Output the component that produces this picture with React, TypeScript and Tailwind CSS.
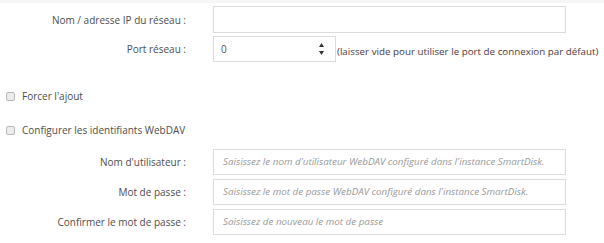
import React from "react";

const font = { fontFamily: '"Open Sans", "Liberation Sans", sans-serif' };

function Row({ label, children, className = "" }: { label: string; children: React.ReactNode; className?: string }) {
  return (
    <div className={"flex items-center " + className}>
      <div className="w-[186px] shrink-0 text-right text-[10px] text-[#4d4d4d] leading-none whitespace-nowrap">{label}</div>
      <div className="ml-[27px] flex items-center">{children}</div>
    </div>
  );
}

function Checkbox({ label, className = "" }: { label: string; className?: string }) {
  return (
    <div className={"flex items-center pl-[6px] " + className}>
      <span className="block w-[9px] h-[9px] rounded-[2px] border border-[#b9b9b9] bg-[#ececec]" />
      <span className="ml-[7px] text-[10px] text-[#4d4d4d] leading-none">{label}</span>
    </div>
  );
}

export default function App() {
  return (
    <div className="w-[604px] h-[243px] bg-white overflow-hidden" style={font}>
      <div className="h-[3px] bg-[#f6f6f6]" />
      <Row label="Nom / adresse IP du réseau :" className="mt-[3px]">
        <div className="w-[353px] h-[27px] border border-[#dcdcdc] bg-white" />
      </Row>
      <Row label="Port réseau :" className="mt-[3px]">
        <div className="w-[123px] h-[26px] border border-[#dcdcdc] bg-white flex items-center pl-[7px] pr-[11px]">
          <span className="text-[10px] text-[#555] leading-none flex-1">0</span>
          <div className="flex flex-col items-center gap-[4px]">
            <svg width="5" height="4" viewBox="0 0 5 4"><path d="M2.5 0L5 4H0z" fill="#333" /></svg>
            <svg width="5" height="4" viewBox="0 0 5 4"><path d="M0 0H5L2.5 4z" fill="#333" /></svg>
          </div>
        </div>
        <span className="ml-[1px] text-[9.8px] text-[#4a3a3e] leading-none mt-[5px] whitespace-nowrap">
          (laisser vide pour utiliser le port de connexion par défaut)
        </span>
      </Row>
      <Checkbox label="Forcer l'ajout" className="mt-[29px]" />
      <Checkbox label="Configurer les identifiants WebDAV" className="mt-[24px]" />
      <Row label="Nom d'utilisateur :" className="mt-[14px]">
        <div className="w-[353px] h-[26px] border border-[#dcdcdc] bg-white flex items-center pl-[9px]">
          <span className="text-[9.8px] italic text-[#999] leading-none whitespace-nowrap">
            Saisissez le nom d'utilisateur WebDAV configuré dans l'instance SmartDisk.
          </span>
        </div>
      </Row>
      <Row label="Mot de passe :" className="mt-[4px]">
        <div className="w-[353px] h-[26px] border border-[#dcdcdc] bg-white flex items-center pl-[9px]">
          <span className="text-[9.8px] italic text-[#999] leading-none whitespace-nowrap">
            Saisissez le mot de passe WebDAV configuré dans l'instance SmartDisk.
          </span>
        </div>
      </Row>
      <Row label="Confirmer le mot de passe :" className="mt-[4px]">
        <div className="w-[353px] h-[26px] border border-[#dcdcdc] bg-white flex items-center pl-[9px]">
          <span className="text-[9.8px] italic text-[#999] leading-none whitespace-nowrap">Saisissez de nouveau le mot de passe</span>
        </div>
      </Row>
    </div>
  );
}
